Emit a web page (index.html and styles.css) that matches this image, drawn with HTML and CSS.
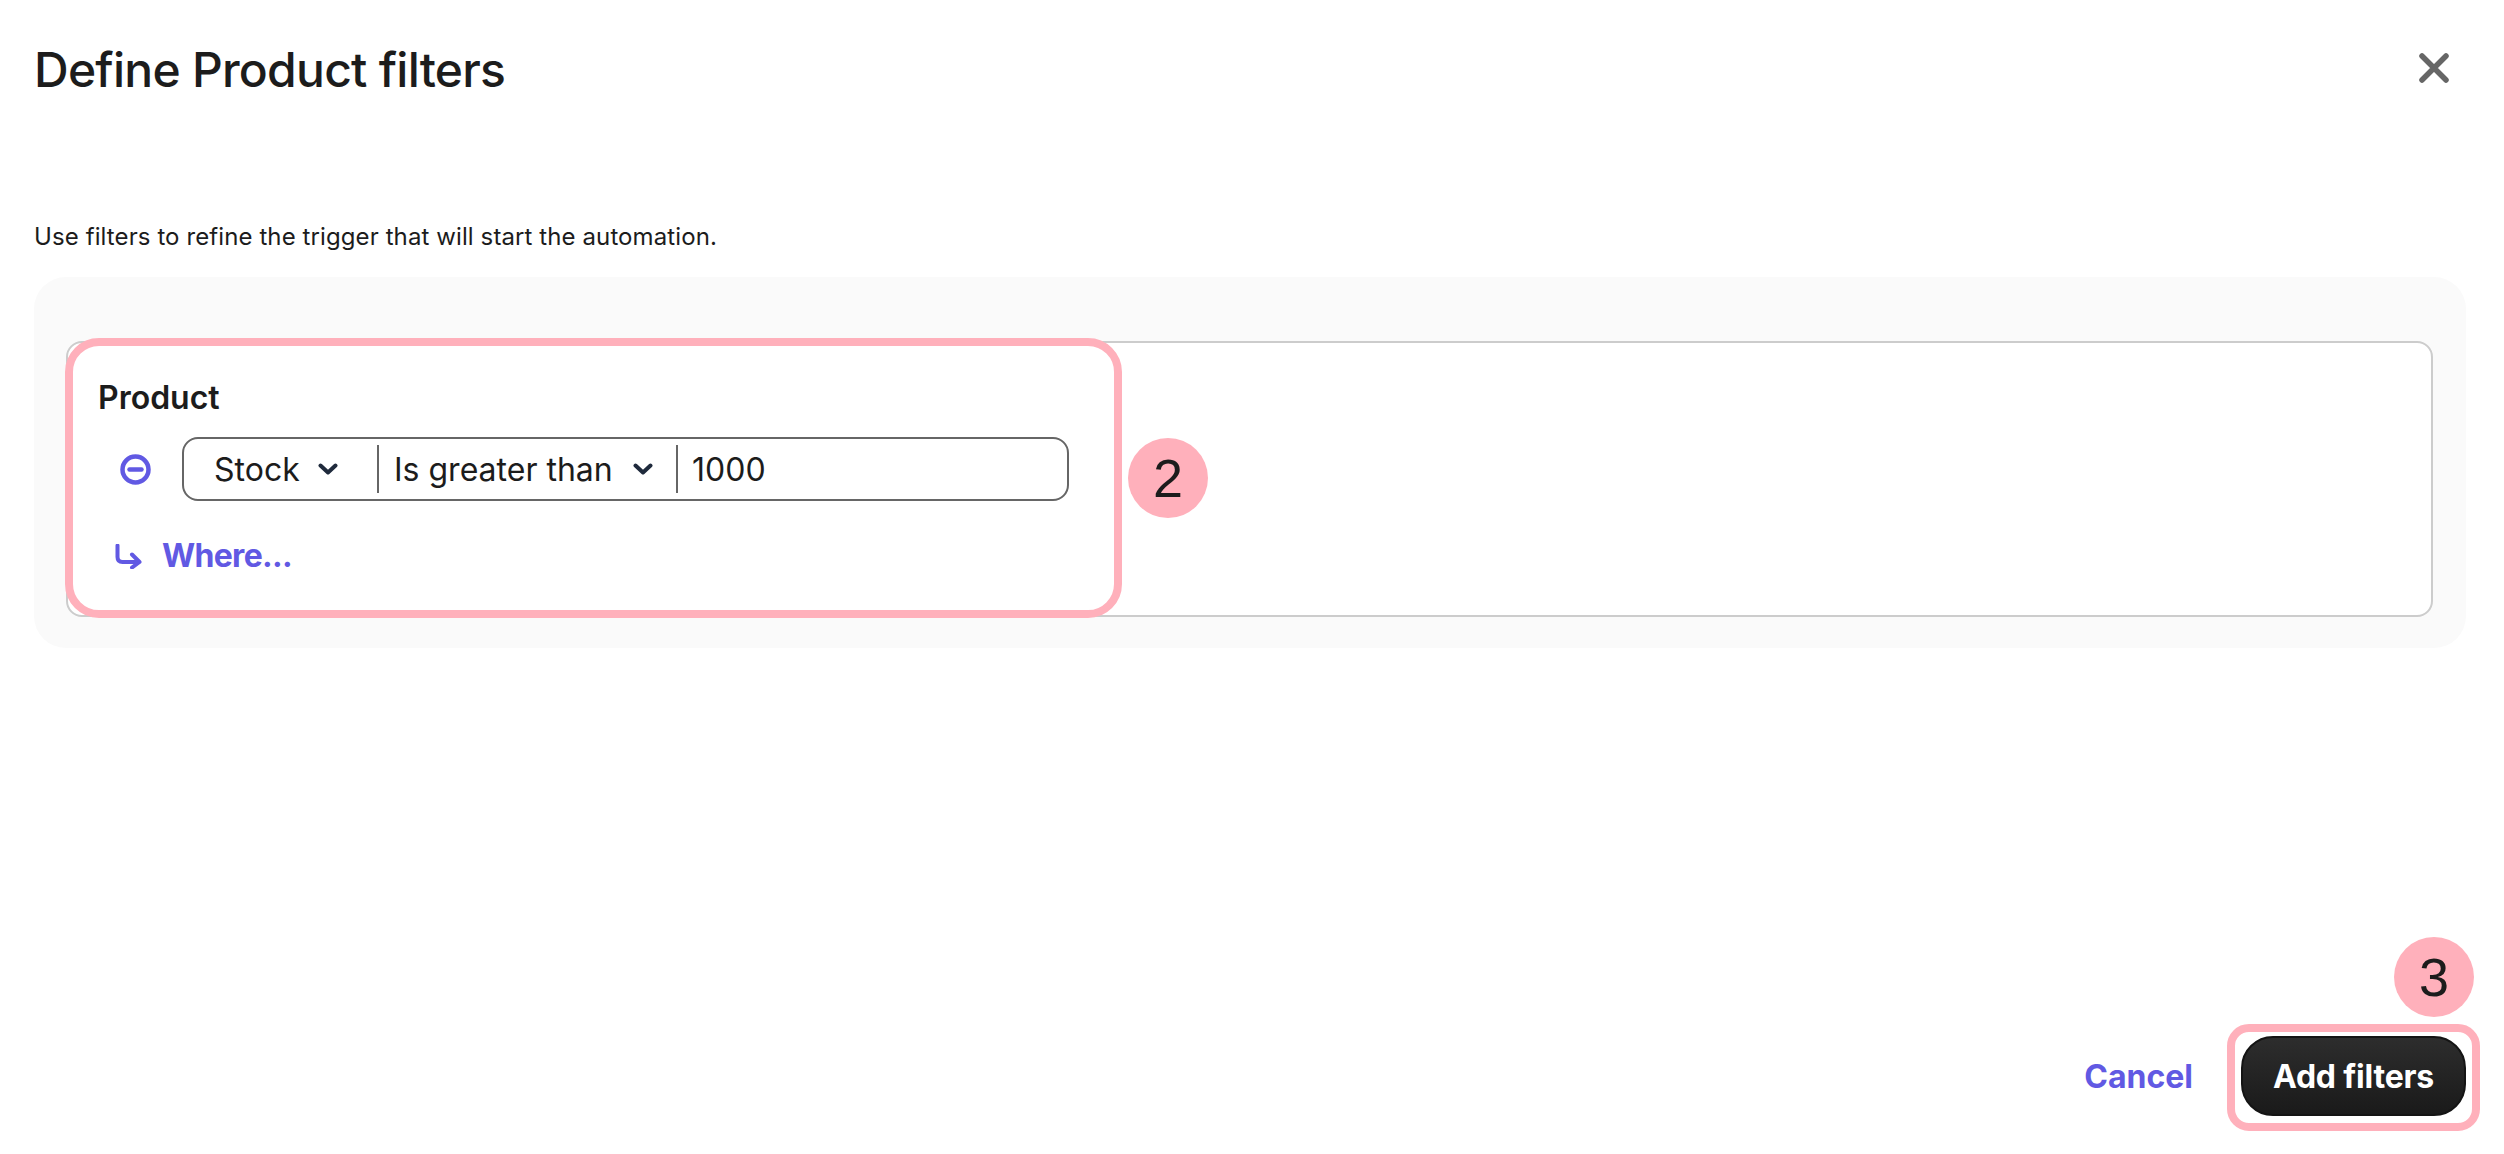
FILE: index.html
```html
<!DOCTYPE html>
<html lang="en"><head>
<meta charset="UTF-8">
<title>Define Product filters</title>
<link rel="stylesheet" href="styles.css">
</head>
<body>
<div class="modal">
  <header class="modal-head">
    <h1>Define Product filters</h1>
    <button class="close" aria-label="Close">
      <svg width="30" height="30" viewBox="0 0 30 30"><path d="M3 3 27 27M27 3 3 27"/></svg>
    </button>
  </header>
  <p class="intro">Use filters to refine the trigger that will start the automation.</p>
  <section class="panel">
    <div class="filter-box">
      <h2>Product</h2>
      <div class="filter-row">
        <svg class="remove" width="31" height="31" viewBox="0 0 31 31"><circle cx="15.5" cy="15.5" r="13"/><path d="M9.5 15.5h12"/></svg>
        <div class="pill">
          <div class="seg seg-field">Stock <svg class="chev" width="20" height="12" viewBox="0 0 20 12"><path d="M2.5 2.500 10 9.500l7.500-7"/></svg></div>
          <div class="seg seg-op">Is greater than <svg class="chev" width="20" height="12" viewBox="0 0 20 12"><path d="M2.500 2.500 10 9.500l7.500-7"/></svg></div>
          <div class="seg seg-value">1000</div>
        </div>
      </div>
      <div class="where">
        <svg width="27" height="25" viewBox="0 0 27 25"><path d="M2.500 1.500v11.500q0 5 5 5H24M17 10.500l7.500 7.500-7.500 5.500"/></svg>
        <span>Where...</span>
      </div>
    </div>
  </section>
  <footer class="modal-foot">
    <a class="cancel">Cancel</a>
    <button class="primary">Add filters</button>
  </footer>
</div>

<!-- tutorial markers over the dialog -->
<div class="mark mark-filter"></div>
<div class="badge badge-2">2</div>
<div class="mark mark-button"></div>
<div class="badge badge-3">3</div>
</body></html>
```

FILE: styles.css
```css
* {
  box-sizing: border-box;
}
body {
  margin: 0;
  background: #fff;
  color: #1c1c1c;
  font-family: Inter, "Liberation Sans", sans-serif;
}
h1, h2, p {
  margin: 0;
}
button {
  font: inherit;
  border: 0;
  padding: 0;
  background: none;
}
.modal {
  position: relative;
  display: flex;
  flex-direction: column;
  height: 1154px;
  padding: 0 38px 38px 34px;
}
/* header */
.modal-head {
  display: flex;
  justify-content: space-between;
  align-items: flex-start;
  height: 221px;
  padding-top: 40px;
}
.modal-head h1 {
  font-size: 48px;
  line-height: 60px;
  font-weight: 500;
  letter-spacing: -.75px;
}
.close {
  width: 30px;
  height: 30px;
  margin-top: 13px;
  margin-right: 17px;
}
.close svg {
  display: block;
}
.close path {
  fill: none;
  stroke: #666;
  stroke-width: 5.5;
  stroke-linecap: round;
}
.intro {
  font-size: 24px;
  line-height: 32px;
  height: 56px;
  letter-spacing: .1px;
}
/* filter panel */
.panel {
  height: 371px;
  padding: 64px 33px 31px 32px;
  background: #fafafa;
  border-radius: 32px;
}
.filter-box {
  height: 276px;
  padding: 35px 0 0 30px;
  background: #fff;
  border: 2px solid #ccc;
  border-radius: 16px;
}
.filter-box h2 {
  font-size: 32px;
  line-height: 40px;
  font-weight: 600;
}
.filter-row {
  display: flex;
  align-items: center;
  margin-top: 19px;
  margin-left: 22px;
  gap: 31px;
}
.remove {
  flex: none;
  fill: none;
  stroke: #6159e3;
  stroke-width: 4.5;
  stroke-linecap: round;
}
.pill {
  display: flex;
  align-items: center;
  width: 887px;
  height: 64px;
  border: 2px solid #666;
  border-radius: 16px;
  font-size: 32px;
}
.seg {
  display: flex;
  align-items: center;
  height: 48px;
}
.seg-field {
  width: 195px;
  padding-left: 30px;
  border-right: 2px solid #666;
  gap: 18px;
}
.seg-op {
  width: 299px;
  padding-left: 15px;
  border-right: 2px solid #666;
  gap: 20px;
}
.seg-value {
  padding-left: 14px;
}
.chev {
  flex: none;
  fill: none;
  stroke: #1f2a3c;
  stroke-width: 4;
  stroke-linecap: round;
  stroke-linejoin: round;
}
.where {
  display: flex;
  align-items: center;
  gap: 20px;
  margin-top: 35px;
  margin-left: 17px;
  color: #6159e3;
  font-size: 32px;
  line-height: 40px;
  font-weight: 700;
  letter-spacing: -.7px;
}
.where svg {
  flex: none;
  fill: none;
  stroke: #6159e3;
  stroke-width: 4;
  stroke-linecap: round;
  stroke-linejoin: round;
}
/* footer */
.modal-foot {
  display: flex;
  justify-content: flex-end;
  align-items: center;
  gap: 48px;
  margin-top: auto;
}
.cancel {
  color: #6159e3;
  font-size: 32px;
  font-weight: 700;
}
.primary {
  width: 225px;
  height: 80px;
  border-radius: 32px;
  border: 2px solid #141414;
  background: linear-gradient(#2d2d2d, #1a1a1a);
  color: #fff;
  font-size: 32px;
  font-weight: 700;
  letter-spacing: -.2px;
}
/* tutorial markers */
.mark {
  position: absolute;
  border: 8px solid #ffb0bb;
}
.mark-filter {
  left: 65px;
  top: 338px;
  width: 1057px;
  height: 280px;
  border-radius: 34px;
}
.mark-button {
  left: 2227px;
  top: 1024px;
  width: 253px;
  height: 107px;
  border-radius: 22px;
}
.badge {
  position: absolute;
  display: flex;
  align-items: center;
  justify-content: center;
  width: 80px;
  height: 80px;
  border-radius: 50%;
  background: #ffb0bb;
  color: #1c1c1c;
  font-family: "Liberation Sans", sans-serif;
  font-size: 54px;
}
.badge-2 {
  left: 1128px;
  top: 438px;
}
.badge-3 {
  left: 2394px;
  top: 937px;
}
```
